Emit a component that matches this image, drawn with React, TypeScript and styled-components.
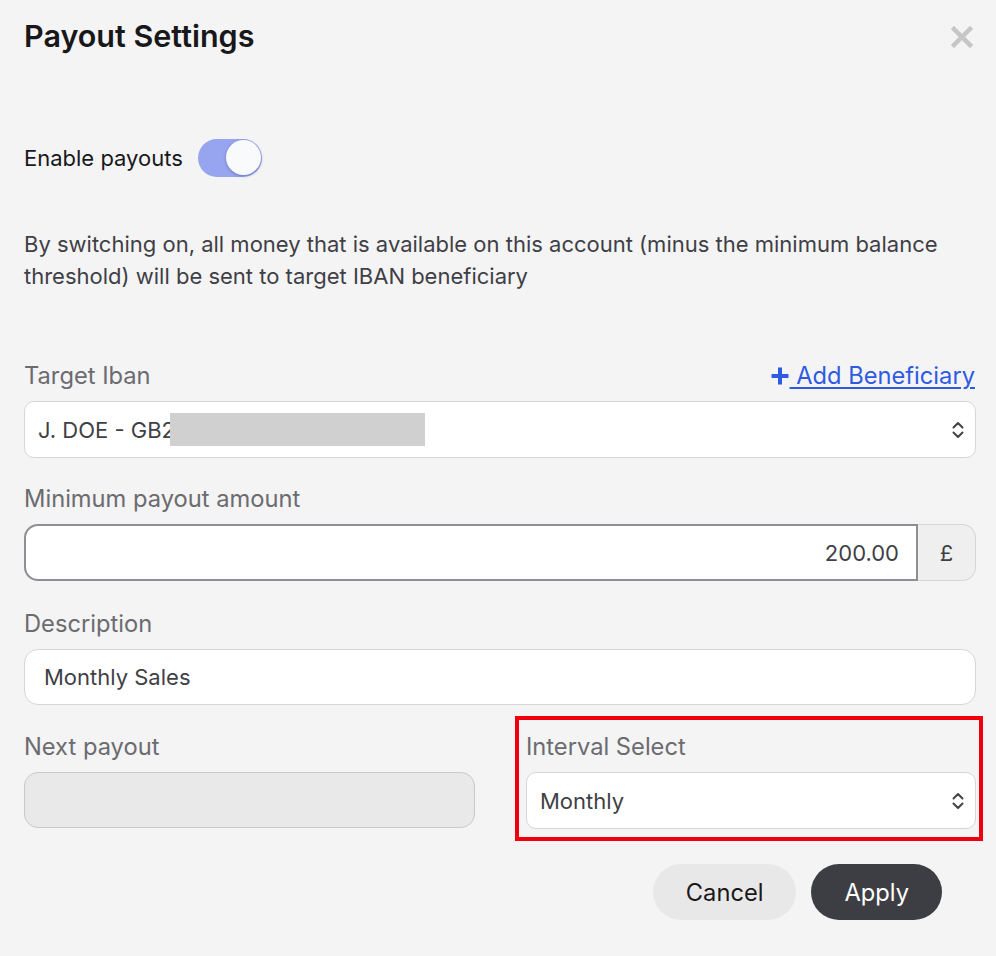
import React from "react";
import styled, { createGlobalStyle } from "styled-components";

const Global = createGlobalStyle`
  html, body { margin: 0; padding: 0; background: #f4f4f4; }
  body { font-family: Inter, "Noto Sans", sans-serif; -webkit-font-smoothing: antialiased; }
  * { box-sizing: border-box; }
`;

const Page = styled.div`
  width: 996px;
  min-height: 956px;
  background: #f4f4f4;
  padding: 14px 20px 0 24px;
  display: flex;
  flex-direction: column;
`;

const Header = styled.div`
  display: flex;
  align-items: center;
  justify-content: space-between;
  height: 42px;
`;

const Title = styled.h1`
  margin: 0;
  font-size: 30.5px;
  font-weight: 600;
  color: #18181b;
  letter-spacing: 0;
`;

const CloseButton = styled.button`
  border: 0;
  background: transparent;
  padding: 0;
  width: 24px;
  height: 24px;
  margin-right: 2px;
  margin-top: 4px;
  display: flex;
  align-items: center;
  justify-content: center;
  cursor: pointer;
`;

const ToggleRow = styled.div`
  display: flex;
  align-items: center;
  gap: 15px;
  margin-top: 83px;
  height: 38px;
`;

const ToggleLabel = styled.span`
  font-size: 22px;
  color: #18181b;
`;

const Track = styled.div<{ $on: boolean }>`
  position: relative;
  width: 64px;
  height: 38px;
  border-radius: 19px;
  background: ${(p) => (p.$on ? "#97a4ef" : "#d4d4d8")};
`;

const Knob = styled.div<{ $on: boolean }>`
  position: absolute;
  top: 1px;
  left: ${(p) => (p.$on ? "28px" : "2px")};
  width: 35px;
  height: 35px;
  border-radius: 50%;
  background: #f9fafb;
  box-shadow: 0 1px 3px rgba(60, 70, 140, 0.45);
`;

const Paragraph = styled.p`
  margin: 51px 0 0 0;
  font-size: 22px;
  line-height: 32px;
  color: #3f3f46;
  max-width: 945px;
`;

const Field = styled.div<{ $top: number }>`
  display: flex;
  flex-direction: column;
  gap: 12px;
  margin-top: ${(p) => p.$top}px;
`;

const LabelRow = styled.div`
  display: flex;
  align-items: center;
  justify-content: space-between;
  height: 26px;
`;

const Label = styled.label`
  font-size: 23.7px;
  line-height: 26px;
  color: #6b6b70;
`;

const AddLink = styled.a`
  display: flex;
  align-items: center;
  font-size: 23.7px;
  line-height: 26px;
  color: #2f5be3;
  text-decoration: underline;
  text-underline-offset: 3px;
  text-decoration-thickness: 1.5px;
  cursor: pointer;
  margin-right: 1px;
`;

const SelectBox = styled.div<{ $pad: number }>`
  position: relative;
  height: 57px;
  background: #fff;
  border: 1.5px solid #d6d6d6;
  border-radius: 10px;
  display: flex;
  align-items: center;
  padding: 0 10px 0 ${(p) => p.$pad}px;
  font-size: 22px;
  color: #3f3f46;
`;

const SelectValue = styled.span`
  flex: 1;
  display: flex;
  align-items: center;
`;

const Redact = styled.span`
  display: inline-block;
  width: 255px;
  height: 33px;
  margin-left: -5px;
  background: #d0d0d0;
`;

const InputGroup = styled.div`
  display: flex;
  height: 57px;
`;

const AmountInput = styled.div`
  flex: 1;
  background: #fff;
  border: 2px solid #8e8e93;
  border-radius: 14px 0 0 14px;
  display: flex;
  align-items: center;
  justify-content: flex-end;
  padding: 0 17px;
  font-size: 22px;
  color: #3f3f46;
`;

const Addon = styled.div`
  width: 58px;
  background: #efefef;
  border: 1.5px solid #d6d6d6;
  border-left: 0;
  border-radius: 0 14px 14px 0;
  display: flex;
  align-items: center;
  justify-content: center;
  font-size: 22px;
  color: #3f3f46;
`;

const TextInput = styled.div<{ $disabled?: boolean }>`
  height: 56px;
  background: ${(p) => (p.$disabled ? "#e9e9e9" : "#fff")};
  border: 1.5px solid ${(p) => (p.$disabled ? "#c9c9c9" : "#d6d6d6")};
  border-radius: 14px;
  display: flex;
  align-items: center;
  padding: 0 19px;
  font-size: 22px;
  color: #3f3f46;
`;

const Grid = styled.div`
  display: grid;
  grid-template-columns: 451px 450px;
  column-gap: 51px;
  margin-top: 29px;
`;

const Cell = styled.div<{ $highlight?: boolean }>`
  position: relative;
  display: flex;
  flex-direction: column;
  gap: 12px;
  ${(p) =>
    p.$highlight &&
    `
    &::after {
      content: "";
      position: absolute;
      top: -18px;
      left: -11px;
      right: -7px;
      bottom: -12px;
      border: 4.5px solid #f0000f;
      pointer-events: none;
    }
  `}
`;

const Footer = styled.div`
  display: flex;
  justify-content: flex-end;
  gap: 15px;
  margin-top: 35px;
  padding-right: 34px;
`;

const Button = styled.button<{ $primary?: boolean }>`
  height: 56px;
  border: 0;
  border-radius: 28px;
  padding: 0 33px;
  font-family: Inter, "Noto Sans", sans-serif;
  font-size: 23.7px;
  background: ${(p) => (p.$primary ? "#3d3e43" : "#e8e8e8")};
  color: ${(p) => (p.$primary ? "#fff" : "#18181b")};
  cursor: pointer;
`;

const Chevrons = () => (
  <svg width="14" height="18" viewBox="0 0 14 18" fill="none" stroke="#444" strokeWidth="2" strokeLinecap="round" strokeLinejoin="round">
    <path d="M2.5 6.5 L7 2 L11.5 6.5" />
    <path d="M2.5 11.5 L7 16 L11.5 11.5" />
  </svg>
);

const CloseIcon = () => (
  <svg width="22" height="22" viewBox="0 0 22 22" fill="none" stroke="#c6c6c6" strokeWidth="4.5" strokeLinecap="square">
    <path d="M3 3 L19 19" />
    <path d="M19 3 L3 19" />
  </svg>
);

const PlusIcon = () => (
  <svg width="20" height="20" viewBox="0 0 20 20" fill="none" stroke="#2f5be3" strokeWidth="4">
    <path d="M10 1.5 V18.5" />
    <path d="M1.5 10 H18.5" />
  </svg>
);

export default function App() {
  return (
    <>
      <Global />
      <Page>
        <Header>
          <Title>Payout Settings</Title>
          <CloseButton aria-label="Close">
            <CloseIcon />
          </CloseButton>
        </Header>

        <ToggleRow>
          <ToggleLabel>Enable payouts</ToggleLabel>
          <Track $on>
            <Knob $on />
          </Track>
        </ToggleRow>

        <Paragraph>
          By switching on, all money that is available on this account (minus the minimum balance threshold) will be
          sent to target IBAN beneficiary
        </Paragraph>

        <Field $top={71}>
          <LabelRow>
            <Label>Target Iban</Label>
            <AddLink>
              <PlusIcon />
              &nbsp;Add Beneficiary
            </AddLink>
          </LabelRow>
          <SelectBox $pad={13}>
            <SelectValue>
              J. DOE - GB2
              <Redact />
            </SelectValue>
            <Chevrons />
          </SelectBox>
        </Field>

        <Field $top={28}>
          <LabelRow>
            <Label>Minimum payout amount</Label>
          </LabelRow>
          <InputGroup>
            <AmountInput>200.00</AmountInput>
            <Addon>£</Addon>
          </InputGroup>
        </Field>

        <Field $top={30}>
          <LabelRow>
            <Label>Description</Label>
          </LabelRow>
          <TextInput>Monthly Sales</TextInput>
        </Field>

        <Grid>
          <Cell>
            <LabelRow>
              <Label>Next payout</Label>
            </LabelRow>
            <TextInput $disabled />
          </Cell>
          <Cell $highlight>
            <LabelRow>
              <Label>Interval Select</Label>
            </LabelRow>
            <SelectBox $pad={13}>
              <SelectValue>Monthly</SelectValue>
              <Chevrons />
            </SelectBox>
          </Cell>
        </Grid>

        <Footer>
          <Button>Cancel</Button>
          <Button $primary>Apply</Button>
        </Footer>
      </Page>
    </>
  );
}
